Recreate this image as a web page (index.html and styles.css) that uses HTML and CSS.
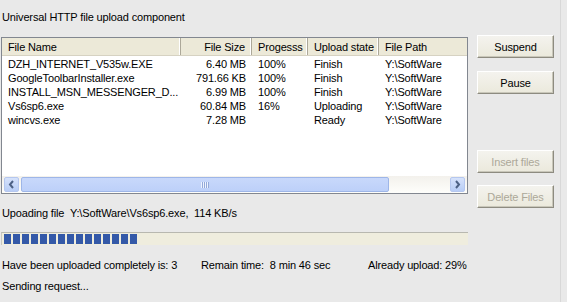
FILE: index.html
```html
<!DOCTYPE html>
<html>
<head>
<meta charset="utf-8">
<link rel="stylesheet" href="styles.css">
</head>
<body>
<div class="app">
  <div class="main">
    <div class="title">Universal HTTP file upload component</div>
    <div class="list">
      <div class="head">
        <div class="hc c1">File Name</div>
        <div class="hc c2 r">File Size</div>
        <div class="hc c3">Progesss</div>
        <div class="hc c4">Upload state</div>
        <div class="hc c5">File Path</div>
      </div>
      <div class="rows">
        <div class="row"><span class="c1">DZH_INTERNET_V535w.EXE</span><span class="c2 r">6.40 MB</span><span class="c3">100%</span><span class="c4">Finish</span><span class="c5">Y:\SoftWare</span></div>
        <div class="row"><span class="c1">GoogleToolbarInstaller.exe</span><span class="c2 r">791.66 KB</span><span class="c3">100%</span><span class="c4">Finish</span><span class="c5">Y:\SoftWare</span></div>
        <div class="row"><span class="c1">INSTALL_MSN_MESSENGER_D...</span><span class="c2 r">6.99 MB</span><span class="c3">100%</span><span class="c4">Finish</span><span class="c5">Y:\SoftWare</span></div>
        <div class="row"><span class="c1">Vs6sp6.exe</span><span class="c2 r">60.84 MB</span><span class="c3">16%</span><span class="c4">Uploading</span><span class="c5">Y:\SoftWare</span></div>
        <div class="row"><span class="c1">wincvs.exe</span><span class="c2 r">7.28 MB</span><span class="c3"></span><span class="c4">Ready</span><span class="c5">Y:\SoftWare</span></div>
      </div>
      <div class="hscroll">
        <div class="sbtn"><svg width="15" height="15" viewBox="0 0 15 15"><path d="M9 4 L6 7.5 L9 11" fill="none" stroke="#4d6185" stroke-width="2"/></svg></div>
        <div class="thumb"><span class="grip"></span></div>
        <div class="track"></div>
        <div class="sbtn"><svg width="15" height="15" viewBox="0 0 15 15"><path d="M6 4 L9 7.5 L6 11" fill="none" stroke="#4d6185" stroke-width="2"/></svg></div>
      </div>
    </div>
    <div class="status">Upoading file&nbsp; Y:\SoftWare\Vs6sp6.exe,&nbsp; 114 KB/s</div>
    <div class="progress">
      <i></i><i></i><i></i><i></i><i></i><i></i><i></i><i></i><i></i><i></i><i></i><i></i><i></i><i></i><i></i>
    </div>
    <div class="stats">
      <span class="s1">Have been uploaded completely is: 3</span>
      <span class="s2">Remain time:&nbsp; 8 min 46 sec</span>
      <span class="s3">Already upload: 29%</span>
    </div>
    <div class="sending">Sending request...</div>
  </div>
  <div class="side">
    <div class="btn">Suspend</div>
    <div class="btn b2">Pause</div>
    <div class="btn dis b3">Insert files</div>
    <div class="btn dis b4">Delete Files</div>
  </div>
  <div class="edge"></div>
</div>
</body>
</html>
```
FILE: styles.css
```css
html, body {
  margin: 0;
  padding: 0;
  background: #e9e9e9;
}
body {
  font-family: "Liberation Sans", Arial, sans-serif;
  font-size: 11px;
  letter-spacing: -0.15px;
  color: #000;
  width: 567px;
  height: 302px;
  overflow: hidden;
}
.app {
  display: flex;
  height: 302px;
}
.main {
  width: 467px;
  margin-left: 1px;
  display: flex;
  flex-direction: column;
}
.title {
  margin-top: 10px;
  height: 14px;
  line-height: 14px;
  padding-left: 1px;
}
.list {
  margin-top: 13px;
  height: 157px;
  box-sizing: border-box;
  border: 1px solid #828790;
  background: #fff;
  display: flex;
  flex-direction: column;
}
.head {
  display: flex;
  height: 18px;
  background: #ece9d8;
  border-bottom: 1px solid #d6d2c2;
  box-sizing: border-box;
}
.hc {
  box-sizing: border-box;
  height: 17px;
  line-height: 18px;
  padding: 0 6px;
  border-right: 1px solid #aca899;
  box-shadow: inset -1px 0 0 #fff;
  white-space: nowrap;
}
.head .c1 { width: 179px; }
.head .c2 { width: 71px; }
.head .c3 { width: 56px; }
.head .c4 { width: 71px; }
.head .c5 { width: 88px; border-right: 0; box-shadow: none; }
.r { text-align: right; }
.rows {
  flex: 1;
  padding-top: 1px;
}
.row {
  display: flex;
  height: 14px;
  line-height: 14px;
  white-space: nowrap;
}
.row span { box-sizing: border-box; padding: 0 6px; overflow: hidden; }
.row .c1 { width: 179px; }
.row .c2 { width: 71px; }
.row .c3 { width: 56px; }
.row .c4 { width: 71px; }
.row .c5 { width: 88px; }
.hscroll {
  display: flex;
  height: 17px;
  padding: 1px 2px;
  box-sizing: border-box;
  background: linear-gradient(#f3f1ec, #fefefb);
  align-items: center;
}
.sbtn {
  width: 15px;
  height: 15px;
  box-sizing: border-box;
  border: 1px solid #b5c7ef;
  border-radius: 2px;
  background: linear-gradient(#d6e2fb, #b8cdf6);
  display: flex;
}
.sbtn svg { margin: -1px; }
.thumb {
  width: 368px;
  height: 15px;
  margin-left: 2px;
  box-sizing: border-box;
  border: 1px solid #9eb6e8;
  border-radius: 2px;
  background: linear-gradient(#c8d8fb, #bdd0f9);
  display: flex;
  justify-content: center;
  align-items: center;
}
.grip {
  width: 8px;
  height: 6px;
  background: repeating-linear-gradient(90deg, #eef3fe 0 1px, #93a9d9 1px 2px);
}
.track { flex: 1; }
.status {
  margin-top: 12px;
  height: 14px;
  line-height: 14px;
  padding-left: 1px;
}
.progress {
  margin-top: 12px;
  height: 13px;
  box-sizing: border-box;
  background: #efedde;
  border-top: 1px solid #b8b8b0;
  border-left: 1px solid #c8c8c0;
  padding: 1px 2px;
  display: flex;
  gap: 2px;
}
.progress i {
  display: block;
  width: 7px;
  height: 10px;
  background: #3459a8;
}
.stats {
  margin-top: 13px;
  height: 14px;
  line-height: 14px;
  display: flex;
  padding-left: 1px;
  white-space: nowrap;
}
.s1 { width: 199px; }
.s2 { width: 167px; }
.sending {
  margin-top: 7px;
  height: 14px;
  line-height: 14px;
  padding-left: 1px;
}
.side {
  margin-left: 9px;
  padding-top: 35px;
  display: flex;
  flex-direction: column;
}
.b2 { margin-top: 13px; }
.b3 { margin-top: 56px; }
.b4 { margin-top: 12px; }
.btn {
  width: 77px;
  height: 23px;
  box-sizing: border-box;
  border: 1px solid;
  border-color: #fff #8d8b80 #8d8b80 #fff;
  box-shadow: inset -1px -1px 0 #c9c7ba;
  background: linear-gradient(#f4f3ee, #ebe9dc);
  display: flex;
  justify-content: center;
  align-items: center;
  font-size: 11px;
}
.btn.dis { color: #aca899; }
.edge {
  margin-left: 6px;
  width: 1px;
  background: #d8d8d8;
}
```
